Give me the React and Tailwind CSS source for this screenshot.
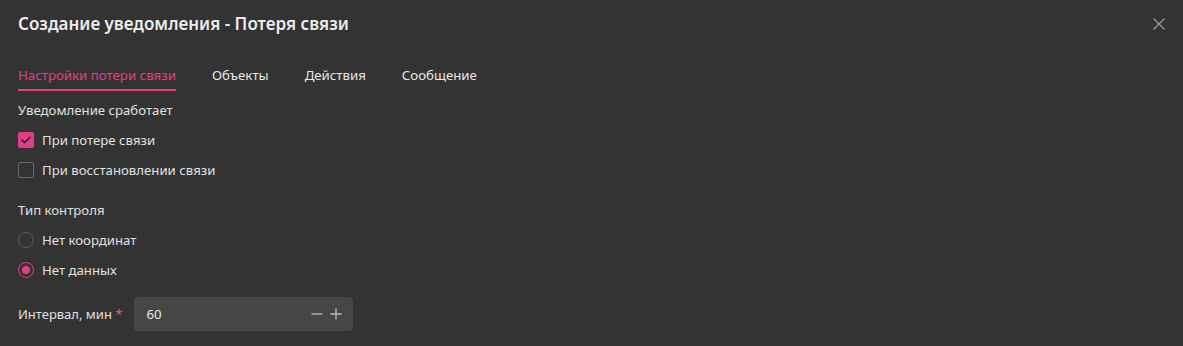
import React from "react";

function Check({ checked, label }) {
  return (
    <div className="flex h-[30px] items-center">
      {checked ? (
        <div className="flex h-[16px] w-[16px] items-center justify-center rounded-[2px] bg-[#e33d84]">
          <svg width="10" height="8" viewBox="0 0 10 8" fill="none">
            <path d="M1 4.2 L3.6 6.6 L9 1.2" stroke="#2a2a2a" strokeWidth="1.6" strokeLinecap="round" strokeLinejoin="round" />
          </svg>
        </div>
      ) : (
        <div className="h-[16px] w-[16px] rounded-[2px] border border-[#6a6a6a]" />
      )}
      <span className="ml-[8px] text-[13.2px] leading-[18px] text-[#e0e0e0]">{label}</span>
    </div>
  );
}

function Radio({ checked, label }) {
  return (
    <div className="flex h-[30px] items-center">
      {checked ? (
        <div className="flex h-[16px] w-[16px] items-center justify-center rounded-full border-[1.5px] border-[#e33d84]">
          <div className="h-[8px] w-[8px] rounded-full bg-[#e33d84]" />
        </div>
      ) : (
        <div className="h-[16px] w-[16px] rounded-full border border-[#5c5c5c]" />
      )}
      <span className="ml-[8px] text-[13.2px] leading-[18px] text-[#e0e0e0]">{label}</span>
    </div>
  );
}

export default function App() {
  const tabs = ["Настройки потери связи", "Объекты", "Действия", "Сообщение"];
  return (
    <div
      className="h-[346px] w-full bg-[#333333] px-[18px] text-[#e0e0e0]"
      style={{ fontFamily: '"Noto Sans", "Open Sans", sans-serif' }}
    >
      <div className="flex h-[48px] items-center justify-between">
        <h1 className="text-[17px] font-semibold leading-[22px] text-[#ececec]">
          Создание уведомления - Потеря связи
        </h1>
        <svg width="14" height="14" viewBox="0 0 14 14" className="mr-[-1px]">
          <path d="M1.5 1.5 L12.5 12.5 M12.5 1.5 L1.5 12.5" stroke="#9a9a9a" strokeWidth="1.3" />
        </svg>
      </div>

      <div className="mt-[12px] flex gap-[36px]">
        {tabs.map((t, i) => (
          <div
            key={t}
            className={
              i === 0
                ? "border-b-2 border-[#e33d84] pt-[6px] pb-[5px] text-[13.25px] leading-[18px] text-[#e33d84]"
                : "border-b-2 border-transparent pt-[6px] pb-[5px] text-[13.25px] leading-[18px] text-[#e8e8e8]"
            }
          >
            {t}
          </div>
        ))}
      </div>

      <div className="mt-[9px] text-[13.2px] leading-[20px] text-[#e0e0e0]">Уведомление сработает</div>
      <div className="mt-[5px] flex flex-col">
        <Check checked label="При потере связи" />
        <Check label="При восстановлении связи" />
      </div>

      <div className="mt-[15px] text-[13.2px] leading-[20px] text-[#e0e0e0]">Тип контроля</div>
      <div className="mt-[5px] flex flex-col">
        <Radio label="Нет координат" />
        <Radio checked label="Нет данных" />
      </div>

      <div className="mt-[12px] flex items-center">
        <span className="text-[13px] leading-[18px] text-[#e0e0e0]">
          Интервал, мин <span className="text-[#e0606e]">*</span>
        </span>
        <div className="ml-[12px] flex h-[34px] w-[219px] items-center justify-between rounded-[3px] bg-[#464646] pl-[12px] pr-[11px]">
          <span className="text-[13.2px] leading-[18px] text-[#e8e8e8]">60</span>
          <div className="flex items-center gap-[7px]">
            <svg width="12" height="12" viewBox="0 0 12 12">
              <path d="M0.5 6 H11.5" stroke="#bdbdbd" strokeWidth="1.3" />
            </svg>
            <svg width="12" height="12" viewBox="0 0 12 12">
              <path d="M0.5 6 H11.5 M6 0.5 V11.5" stroke="#bdbdbd" strokeWidth="1.3" />
            </svg>
          </div>
        </div>
      </div>
    </div>
  );
}
